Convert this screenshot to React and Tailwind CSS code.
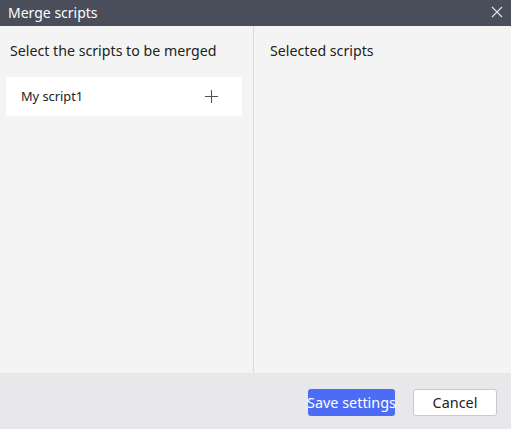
export default function App() {
  return (
    <div
      className="w-[511px] h-[429px] flex flex-col bg-[#f4f4f4] overflow-hidden"
      style={{ fontFamily: '"Noto Sans", "Open Sans", sans-serif' }}
    >
      {/* Title bar */}
      <div className="h-[26px] shrink-0 bg-[#4a4d5a] flex items-center justify-between pl-[8px] pr-[8px]">
        <span className="text-white text-[14px] leading-none">Merge scripts</span>
        <svg width="12" height="12" viewBox="0 0 12 12" className="mb-[2px]">
          <path d="M1 1 L11 11 M11 1 L1 11" stroke="#e4e5ea" strokeWidth="1.1" />
        </svg>
      </div>

      {/* Body */}
      <div className="flex flex-1 min-h-0">
        <div className="w-[254px] border-r border-[#dcdcdc] flex flex-col">
          <div className="h-[51px] pl-[10px] pt-[14px] text-[14.2px] text-[#222] leading-[22px]">
            Select the scripts to be merged
          </div>
          <div className="mx-[6px] w-[236px] h-[39px] bg-white flex items-center justify-between pl-[15px] pr-[24px]">
            <span className="text-[12.8px] text-[#222]">My script1</span>
            <svg width="13" height="13" viewBox="0 0 13 13">
              <path d="M6.5 0 V13 M0 6.5 H13" stroke="#555" strokeWidth="1.1" />
            </svg>
          </div>
        </div>
        <div className="flex-1 pl-[16px] pt-[14px] text-[14.2px] text-[#222] leading-[22px]">
          Selected scripts
        </div>
      </div>

      {/* Footer */}
      <div className="h-[56px] shrink-0 bg-[#e8e8ea] flex items-start justify-end pt-[16px] pr-[14px] gap-[18px]">
        <button className="w-[87px] h-[27px] pt-[2px] bg-[#4d6cf5] text-white text-[14.4px] rounded-[3px] flex items-center justify-center whitespace-nowrap leading-none">
          Save settings
        </button>
        <button className="w-[84px] h-[27px] pt-[2px] bg-white border border-[#c9c9cc] text-[#222] text-[14.4px] rounded-[3px] flex items-center justify-center leading-none">
          Cancel
        </button>
      </div>
    </div>
  );
}
